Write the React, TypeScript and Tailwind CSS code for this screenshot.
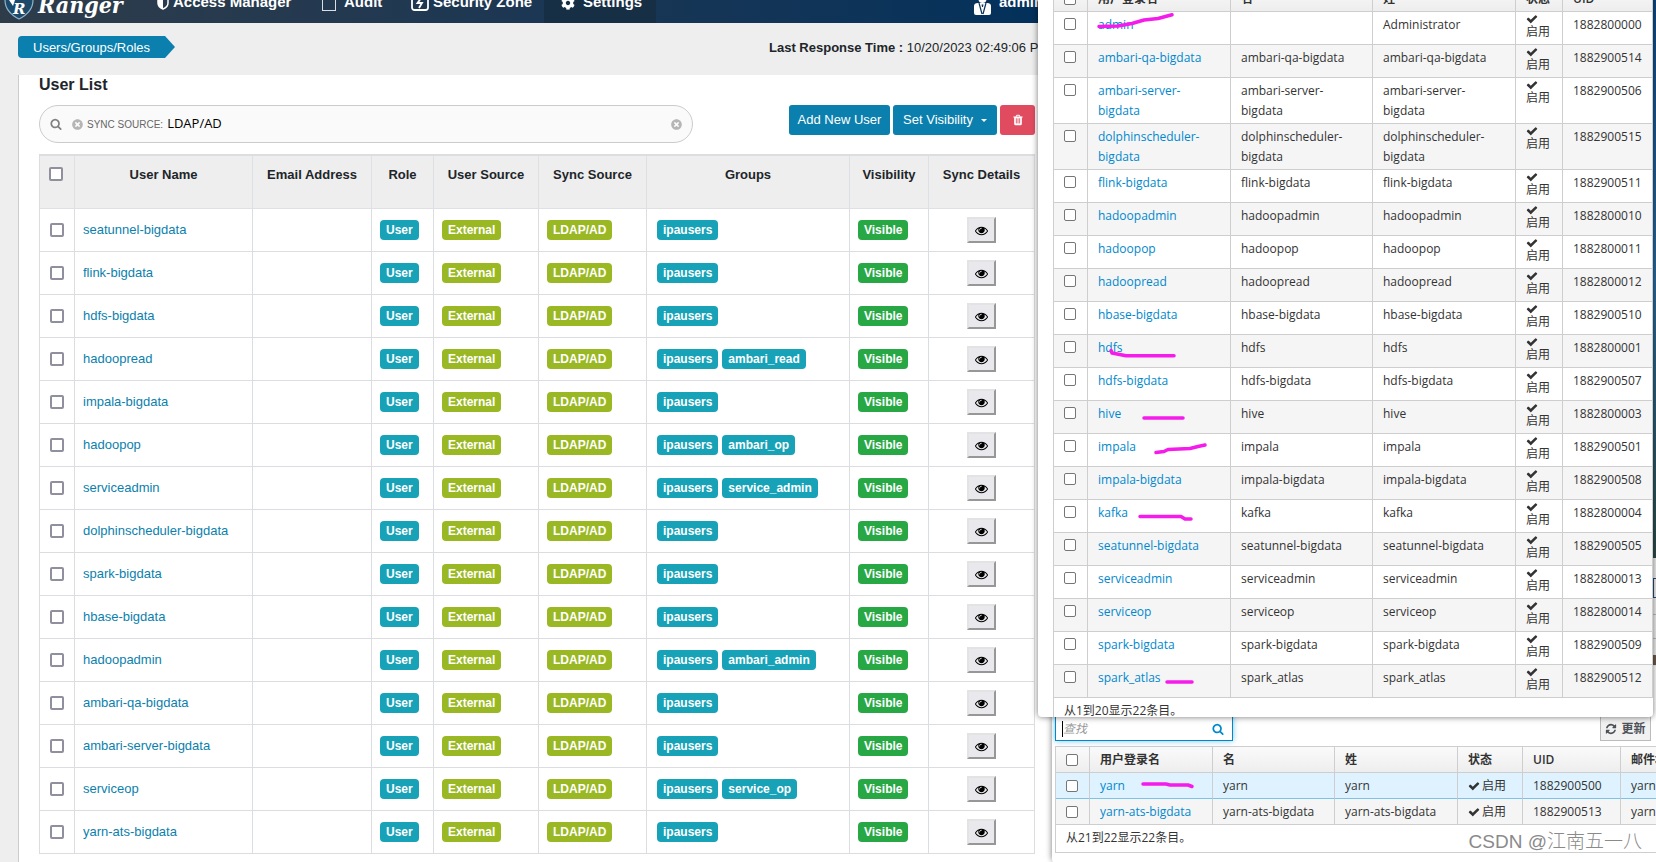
import { useState } from 'react';
import { FaCog, FaTimesCircle } from 'react-icons/fa';

interface RangerUser {
  name: string;
  groups: string[];
}

interface IpaUser {
  login: string;
  first: string;
  last: string;
  uid: string;
}

const rangerUsers: RangerUser[] = [
  { name: 'seatunnel-bigdata', groups: ['ipausers'] },
  { name: 'flink-bigdata', groups: ['ipausers'] },
  { name: 'hdfs-bigdata', groups: ['ipausers'] },
  { name: 'hadoopread', groups: ['ipausers', 'ambari_read'] },
  { name: 'impala-bigdata', groups: ['ipausers'] },
  { name: 'hadoopop', groups: ['ipausers', 'ambari_op'] },
  { name: 'serviceadmin', groups: ['ipausers', 'service_admin'] },
  { name: 'dolphinscheduler-bigdata', groups: ['ipausers'] },
  { name: 'spark-bigdata', groups: ['ipausers'] },
  { name: 'hbase-bigdata', groups: ['ipausers'] },
  { name: 'hadoopadmin', groups: ['ipausers', 'ambari_admin'] },
  { name: 'ambari-qa-bigdata', groups: ['ipausers'] },
  { name: 'ambari-server-bigdata', groups: ['ipausers'] },
  { name: 'serviceop', groups: ['ipausers', 'service_op'] },
  { name: 'yarn-ats-bigdata', groups: ['ipausers'] },
];

const same = (login: string, uid: string): IpaUser => ({ login, first: login, last: login, uid });

const ipaPageOne: IpaUser[] = [
  { login: 'admin', first: '', last: 'Administrator', uid: '1882800000' },
  same('ambari-qa-bigdata', '1882900514'),
  same('ambari-server-bigdata', '1882900506'),
  same('dolphinscheduler-bigdata', '1882900515'),
  same('flink-bigdata', '1882900511'),
  same('hadoopadmin', '1882800010'),
  same('hadoopop', '1882800011'),
  same('hadoopread', '1882800012'),
  same('hbase-bigdata', '1882900510'),
  same('hdfs', '1882800001'),
  same('hdfs-bigdata', '1882900507'),
  same('hive', '1882800003'),
  same('impala', '1882900501'),
  same('impala-bigdata', '1882900508'),
  same('kafka', '1882800004'),
  same('seatunnel-bigdata', '1882900505'),
  same('serviceadmin', '1882800013'),
  same('serviceop', '1882800014'),
  same('spark-bigdata', '1882900509'),
  same('spark_atlas', '1882900512'),
];

const ipaPageTwo: IpaUser[] = [same('yarn', '1882900500'), same('yarn-ats-bigdata', '1882900513')];

const icons = {
  eye: 'M1664 960q-152-236-381-353 61 104 61 225 0 185-131.5 316.5t-316.5 131.5-316.5-131.5-131.5-316.5q0-121 61-225-229 117-381 353 133 205 333.5 326.5t434.5 121.5 434.5-121.5 333.5-326.5zm-720-384q0-20-14-34t-34-14q-125 0-214.5 89.5t-89.5 214.5q0 20 14 34t34 14 34-14 14-34q0-86 61-147t147-61q20 0 34-14t14-34zm848 384q0 34-20 69-140 230-376.5 368.5t-499.5 138.5-499.5-139-376.5-368q-20-35-20-69t20-69q140-229 376.5-368t499.5-139 499.5 139 376.5 368q20 35 20 69z',
  check: 'M1671 566q0 40-28 68l-724 724-136 136q-28 28-68 28t-68-28l-136-136-362-362q-28-28-28-68t28-68l136-136q28-28 68-28t68 28l294 295 656-657q28-28 68-28t68 28l136 136q28 28 28 68z',
  search: 'M1216 832q0-185-131.5-316.5t-316.5-131.5-316.5 131.5-131.5 316.5 131.5 316.5 316.5 131.5 316.5-131.5 131.5-316.5zm512 832q0 52-38 90t-90 38q-54 0-90-38l-343-342q-179 124-399 124-143 0-273.5-55.5t-225-150-150-225-55.5-273.5 55.5-273.5 150-225 225-150 273.5-55.5 273.5 55.5 225 150 150 225 55.5 273.5q0 220-124 399l343 343q37 37 37 90z',
  refresh: 'M1639 1056q0 5-1 7-64 268-268 434.5t-478 166.5q-146 0-282.5-55t-243.5-157l-129 129q-19 19-45 19t-45-19-19-45v-448q0-26 19-45t45-19h448q26 0 45 19t19 45-19 45l-137 137q71 66 161 102t187 36q134 0 250-65t186-179q11-17 53-117 8-23 30-23h192q13 0 22.5 9.5t9.5 22.5zm25-800v448q0 26-19 45t-45 19h-448q-26 0-45-19t-19-45 19-45l138-138q-148-137-349-137-134 0-250 65t-186 179q-11 17-53 117-8 23-30 23h-199q-13 0-22.5-9.5t-9.5-22.5v-7q65-268 270-434.5t480-166.5q146 0 284 55.5t245 156.5l130-129q19-19 45-19t45 19 19 45z',
  trash: 'M704 1376v-704q0-14-9-23t-23-9h-64q-14 0-23 9t-9 23v704q0 14 9 23t23 9h64q14 0 23-9t9-23zm256 0v-704q0-14-9-23t-23-9h-64q-14 0-23 9t-9 23v704q0 14 9 23t23 9h64q14 0 23-9t9-23zm256 0v-704q0-14-9-23t-23-9h-64q-14 0-23 9t-9 23v704q0 14 9 23t23 9h64q14 0 23-9t9-23zm-544-992h448l-48-117q-7-9-17-11h-317q-10 2-17 11zm928 32v64q0 14-9 23t-23 9h-96v948q0 83-47 143.5t-113 60.5h-832q-66 0-113-58.5t-47-141.5v-952h-96q-14 0-23-9t-9-23v-64q0-14 9-23t23-9h309l70-167q15-37 54-63t79-26h320q40 0 79 26t54 63l70 167h309q14 0 23 9t9 23z',
};

function Icon({ name, className }: { name: keyof typeof icons; className: string }) {
  return (
    <svg viewBox="0 0 1792 1792" fill="currentColor" className={className} aria-hidden="true">
      <path d={icons[name]} />
    </svg>
  );
}

function Badge({ color, children }: { color: string; children: string }) {
  return (
    <span className={`inline-block h-5 rounded px-1.5 align-middle text-xs leading-5 font-bold text-white ${color}`}>
      {children}
    </span>
  );
}

function RangerCheckbox({ label }: { label: string }) {
  return (
    <input
      type="checkbox"
      aria-label={label}
      className="block size-3.5 appearance-none rounded-xs border-2 border-[#8f8f9d] bg-white checked:bg-[#0b7fad]"
    />
  );
}

function IpaCheckbox({ label }: { label: string }) {
  return (
    <input
      type="checkbox"
      aria-label={label}
      className="block size-3 appearance-none rounded-xs border border-[#767676] bg-white checked:bg-[#0088ce]"
    />
  );
}

function NavBar() {
  return (
    <nav className="-mt-[18px] flex h-[41px] items-center bg-linear-to-r from-[#2e3c4a] to-[#03315b] text-[15px] font-bold whitespace-nowrap text-white">
      <a href="#home" className="flex w-[157px] items-center gap-1 pl-1">
        <svg viewBox="0 0 30 34" className="h-[34px] w-[30px]" aria-hidden="true">
          <path d="M1 3 Q8 4 15 0 Q22 4 29 3 V14 Q29 26 15 33 Q1 26 1 14 Z" fill="#1c4a6b" stroke="#8fb4cb" strokeWidth="1.2" />
          <path d="M5 14l4 6 2-6z" fill="#fff" />
          <text x="9" y="28" fontSize="15" fontWeight="bold" fontStyle="italic" fontFamily="DejaVu Serif" fill="#fff">R</text>
        </svg>
        <span className="pt-1 font-['DejaVu_Serif_Condensed','DejaVu_Serif',serif] text-[23px] leading-7 italic">Ranger</span>
      </a>
      <a href="#access" className="flex w-[165px] items-center gap-1">
        <svg viewBox="0 0 12 14" className="h-3.5 w-3" aria-hidden="true">
          <path d="M1 1h10v6q0 4-5 6-5-2-5-6z" fill="none" stroke="#fff" strokeWidth="1.5" />
          <path d="M1 1h5v12q-5-2-5-6z" fill="#fff" />
        </svg>
        Access Manager
      </a>
      <a href="#audit" className="flex w-[89px] items-center gap-2">
        <span className="h-4 w-3.5 border border-[#d8dfe5]" />
        Audit
      </a>
      <a href="#zone" className="flex w-[133px] items-center gap-1">
        <svg viewBox="0 0 18 18" className="size-[18px]" fill="none" stroke="#fff" aria-hidden="true">
          <rect x="1" y="1" width="16" height="15" rx="2.5" strokeWidth="1.8" />
          <path d="M10.5 3.5L6.500 9H11l-3 5" strokeWidth="1.8" />
        </svg>
        Security Zone
      </a>
      <a href="#settings" className="flex h-full w-28 items-center gap-2 bg-[#172f45] pl-[17px]">
        <FaCog className="size-3.5" />
        Settings
      </a>
      <a href="#profile" className="ml-auto flex w-[64px] items-center gap-2">
        <svg viewBox="0 0 17 20" className="mt-1 h-5 w-[17px] shrink-0" aria-hidden="true">
          <circle cx="8.500" cy="4" r="4" fill="#fff" />
          <path d="M0 11q0-3 4-3h9q4 0 4 3v7q0 2-2 2H2q-2 0-2-2z" fill="#fff" />
          <path d="M5 8l3 11M12 8L9 19" stroke="#0b3357" strokeWidth="1.200" />
          <path d="M7.500 9.500h2l-.5 2.500h-1z" fill="#0b3357" />
        </svg>
        <span>admin</span>
      </a>
    </nav>
  );
}

function RangerPage() {
  const [source, setSource] = useState('LDAP/AD');

  return (
    <main className="min-w-0 flex-1 overflow-hidden bg-[#eeeeee] font-['Liberation_Sans',Arial,sans-serif] text-[13px] text-[#212529]">
      <NavBar />
      <div className="flex h-[52px] items-start justify-between pt-[13px] pl-[18px]">
        <a
          href="#users"
          className="h-[22px] w-[157px] rounded-l bg-[#0b7fad] pl-[15px] text-[13px] leading-6 text-white [clip-path:polygon(0_0,calc(100%-10px)_0,100%_50%,calc(100%-10px)_100%,0_100%)]"
        >
          Users/Groups/Roles
        </a>
        <p className="w-[269px] leading-6 whitespace-nowrap">
          <b>Last Response Time :</b> 10/20/2023 02:49:06 PM
        </p>
      </div>

      <section className="ml-[18px] min-h-[787px] border-l border-[#cccccc] bg-white pr-[3px] pl-5">
        <h1 className="pt-px text-base leading-[18px] font-bold">User List</h1>
        <div className="mt-[11px] flex items-start justify-between">
          <div className="flex h-[38px] w-[654px] items-center rounded-full border border-[#cccccc] bg-[#fafafa] pr-2.5 pl-2.5">
            <Icon name="search" className="size-3 text-[#808080]" />
            <FaTimesCircle className="ml-2.5 size-[11px] text-[#b5b5b5]" />
            <label htmlFor="source" className="ml-1 text-[10px] whitespace-nowrap text-[#666666]">SYNC SOURCE:</label>
            <input
              id="source"
              value={source}
              onChange={(e) => setSource(e.target.value)}
              className="ml-1 min-w-0 flex-1 bg-transparent font-['Open_Sans',sans-serif] text-[13px] text-black outline-none"
            />
            <button type="button" aria-label="Clear search" onClick={() => setSource('')}>
              <FaTimesCircle className="size-[11px] text-[#b5b5b5]" />
            </button>
          </div>
          <div className="flex gap-[3px] text-[13px] whitespace-nowrap text-white">
            <button type="button" className="h-[30px] w-[101px] rounded-[3px] bg-[#0b7fad]">Add New User</button>
            <button type="button" className="flex h-[30px] w-[104px] items-center justify-center gap-2 rounded-[3px] bg-[#0b7fad]">
              Set Visibility
              <span className="border-x-3 border-t-3 border-x-transparent border-t-white" />
            </button>
            <button type="button" aria-label="Delete" className="flex h-[30px] w-[35px] items-center justify-center rounded-[3px] bg-[#e04b5f]">
              <Icon name="trash" className="size-3" />
            </button>
          </div>
        </div>

        <table className="mt-[11px] w-full table-fixed border-separate border-spacing-0 border-t-2 border-l border-[#dcdde0]">
          <colgroup>
            <col className="w-[35px]" />
            <col className="w-[178px]" />
            <col className="w-[119px]" />
            <col className="w-[62px]" />
            <col className="w-[105px]" />
            <col className="w-[108px]" />
            <col />
            <col className="w-[79px]" />
            <col className="w-[106px]" />
          </colgroup>
          <thead>
            <tr className="h-[53px] bg-[#eeeeee] *:border-r *:border-b *:border-[#dee0e4] *:pt-[9px] *:align-top *:leading-5">
              <th className="pl-[9px]">
                <div className="pt-0.5"><RangerCheckbox label="Select all users" /></div>
              </th>
              <th>User Name</th>
              <th>Email Address</th>
              <th>Role</th>
              <th>User Source</th>
              <th>Sync Source</th>
              <th>Groups</th>
              <th>Visibility</th>
              <th>Sync Details</th>
            </tr>
          </thead>
          <tbody>
            {rangerUsers.map((user) => (
              <tr key={user.name} className="h-[43px] *:border-r *:border-b *:border-[#dcdde0] *:px-2 *:py-0">
                <td><div className="pl-0.5"><RangerCheckbox label={`Select ${user.name}`} /></div></td>
                <td><a href="#user" className="text-[#0b7fad]">{user.name}</a></td>
                <td />
                <td><Badge color="bg-[#17a2b8]">User</Badge></td>
                <td><Badge color="bg-[#9ab823]">External</Badge></td>
                <td><Badge color="bg-[#9ab823]">LDAP/AD</Badge></td>
                <td>
                  <div className="flex gap-1 pl-0.5">
                    {user.groups.map((group) => (
                      <Badge key={group} color="bg-[#17a2b8]">{group}</Badge>
                    ))}
                  </div>
                </td>
                <td><Badge color="bg-[#28a745]">Visible</Badge></td>
                <td>
                  <button
                    type="button"
                    aria-label={`Sync details of ${user.name}`}
                    className="mx-auto flex h-[26px] w-[29px] items-center justify-center border-2 border-t-[#e3e3e3] border-r-[#979797] border-b-[#979797] border-l-[#e3e3e3] bg-[#e9e9ed]"
                  >
                    <Icon name="eye" className="size-[13px] text-black" />
                  </button>
                </td>
              </tr>
            ))}
          </tbody>
        </table>
      </section>
    </main>
  );
}

function IpaFirstPage() {
  return (
    <div className="absolute -top-[15px] right-[3px] left-0 z-10 rounded-b bg-white pl-[15px] shadow-[0_0_6px_rgba(0,0,0,0.55)]">
      <table className="w-full table-fixed border-separate border-spacing-0 border-t border-l border-[#cecece]">
        <colgroup>
          <col className="w-[34px]" />
          <col className="w-[143px]" />
          <col className="w-[142px]" />
          <col className="w-[143px]" />
          <col className="w-[47px]" />
          <col />
        </colgroup>
        <thead>
          <tr className="h-[26px] bg-linear-to-b from-[#fafafa] to-[#ededed] text-left *:border-r *:border-b *:border-[#cecece] *:py-0 *:pl-2.5">
            <th><IpaCheckbox label="全选" /></th>
            <th>用户登录名</th>
            <th>名</th>
            <th>姓</th>
            <th>状态</th>
            <th className="font-semibold">UID</th>
          </tr>
        </thead>
        <tbody>
          {ipaPageOne.map((user) => (
            <tr
              key={user.login}
              className="h-[33px] leading-5 even:bg-[#f5f5f5] *:border-r *:border-b *:border-[#cecece] *:px-2.5 *:pt-[3px] *:pb-0.5 *:align-top"
            >
              <td><div className="pt-[3px]"><IpaCheckbox label={user.login} /></div></td>
              <td><a href="#user" className="text-[#0088ce]">{user.login}</a></td>
              <td>{user.first}</td>
              <td>{user.last}</td>
              <td>
                <Icon name="check" className="-mt-0.5 block size-3" />
                <span className="block leading-[13px]">启用</span>
              </td>
              <td>{user.uid}</td>
            </tr>
          ))}
        </tbody>
      </table>
      <p className="h-[19px] overflow-hidden border-l border-[#cecece] pl-2.5 leading-[25px]">从1到20显示22条目。</p>
    </div>
  );
}

function IpaSecondPage() {
  return (
    <div className="absolute top-[700px] right-0 left-3.5 overflow-hidden rounded-bl bg-white pt-4 pb-2.5 pl-[3px]">
      <div className="flex justify-between pr-[5px]">
        <div className="flex h-[25px] w-[178px] items-center border border-[#0088ce] pr-2 pl-1.5 shadow-[0_0_6px_rgba(0,136,206,0.5)]">
          <input
            aria-label="查找"
            placeholder="查找"
            className="min-w-0 flex-1 border-l border-black text-xs italic outline-none placeholder:text-[#999999]"
          />
          <button type="button" aria-label="搜索" className="text-[#0088ce]">
            <Icon name="search" className="size-3" />
          </button>
        </div>
        <button type="button" className="flex h-[25px] w-[51px] items-center justify-center gap-1 border border-[#bbbbbb] bg-[#f1f1f1] font-semibold whitespace-nowrap text-[#4d5258]">
          <Icon name="refresh" className="size-3 shrink-0" />
          更新
        </button>
      </div>

      <table className="mt-[5px] w-[665px] table-fixed border-separate border-spacing-0 border-t border-l border-[#cecece]">
        <colgroup>
          <col className="w-[34px]" />
          <col className="w-[123px]" />
          <col className="w-[122px]" />
          <col className="w-[123px]" />
          <col className="w-[65px]" />
          <col className="w-[98px]" />
          <col />
        </colgroup>
        <thead>
          <tr className="h-[26px] bg-linear-to-b from-[#fafafa] to-[#ededed] text-left *:border-r *:border-b *:border-[#cecece] *:py-0 *:pl-2.5">
            <th><IpaCheckbox label="全选" /></th>
            <th>用户登录名</th>
            <th>名</th>
            <th>姓</th>
            <th>状态</th>
            <th className="font-semibold">UID</th>
            <th>邮件地址</th>
          </tr>
        </thead>
        <tbody>
          {ipaPageTwo.map((user) => (
            <tr
              key={user.login}
              className="h-[26px] odd:bg-[#def3ff] even:bg-[#f5f5f5] *:border-r *:border-b *:border-[#cecece] *:py-0 *:pl-2.5 odd:*:border-b-[#7dc3e8]"
            >
              <td><IpaCheckbox label={user.login} /></td>
              <td><a href="#user" className="text-[#0088ce]">{user.login}</a></td>
              <td>{user.first}</td>
              <td>{user.last}</td>
              <td>
                <span className="flex items-center gap-0.5 whitespace-nowrap">
                  <Icon name="check" className="size-3" />
                  启用
                </span>
              </td>
              <td>{user.uid}</td>
              <td>yarn</td>
            </tr>
          ))}
        </tbody>
      </table>
      <p className="h-7 border-b border-l border-[#cecece] pl-2.5 leading-[26px]">从21到22显示22条目。</p>
    </div>
  );
}

// Slice of the desktop and of another window that shows at the right edge
function DesktopEdge() {
  return (
    <div className="absolute inset-y-0 right-0 w-[3px]" aria-hidden="true">
      <div className="h-[558px] bg-linear-to-b from-[#0c4a85] via-[#2a6a9c] to-[#2c4a48]" />
      <div className="h-[108px] bg-[#efefef] pt-5">
        <div className="h-5 border-y border-l border-[#2b4a7d]" />
        <div className="mt-4 h-[25px] border-y border-[#bbbbbb]" />
        <div className="mt-4 h-2.5 bg-[#6b5a4a]" />
      </div>
    </div>
  );
}

function Marker() {
  return (
    <svg
      viewBox="1038 0 618 862"
      className="pointer-events-none absolute top-0 left-0 z-20 h-[862px] w-[618px]"
      fill="none"
      stroke="#f51bea"
      strokeWidth="3.5"
      strokeLinecap="round"
      strokeLinejoin="round"
      aria-hidden="true"
    >
      <path d="M1099 26.500L1118 26L1132 23.500L1144 20L1158 18.500L1172 14.700" />
      <path d="M1111 350.500L1112 353L1126 355.700H1174" />
      <path d="M1144 418H1183" />
      <path d="M1156 452.500L1164 451.500L1168 449.500L1190 448.500L1198 446.500L1205 445" />
      <path d="M1140 516.500H1181L1185 519H1191" />
      <path d="M1167 682H1192" />
      <path d="M1143 784H1166L1170 785H1188L1192 786.500" />
    </svg>
  );
}

export default function App() {
  return (
    <div className="flex min-h-screen overflow-hidden bg-white">
      <RangerPage />
      <aside className="relative z-10 w-[618px] shrink-0 bg-white font-['Open_Sans','Noto_Sans_CJK_SC',sans-serif] text-xs text-[#333333]">
        <DesktopEdge />
        <div className="absolute top-[700px] left-3.5 h-[161px] w-2 rounded-bl shadow-[0_0_6px_rgba(0,0,0,0.55)]" />
        <IpaSecondPage />
        <IpaFirstPage />
        <Marker />
        <p className="absolute right-3.5 bottom-2 z-20 font-['Liberation_Sans','Noto_Sans_CJK_SC',sans-serif] text-[19px] leading-6 font-light whitespace-nowrap text-[#8a8a8a]">
          CSDN @江南五一八
        </p>
      </aside>
    </div>
  );
}
